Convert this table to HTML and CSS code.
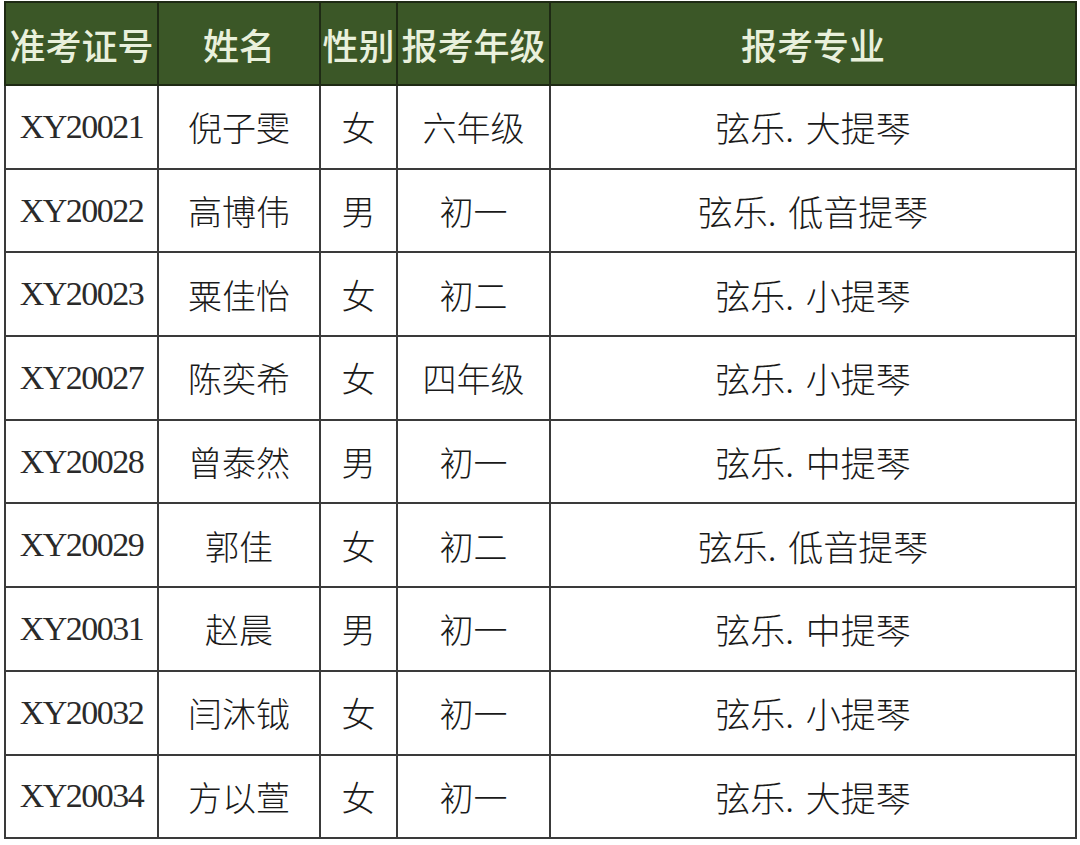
FILE: index.html
```html
<!DOCTYPE html>
<html lang="zh">
<head>
<meta charset="utf-8">
<link rel="stylesheet" href="styles.css">
</head>
<body>
<div class="wrap">
<table class="roster">
  <colgroup>
    <col class="c1"><col class="c2"><col class="c3"><col class="c4"><col class="c5">
  </colgroup>
  <thead>
    <tr><th>准考证号</th><th>姓名</th><th>性别</th><th>报考年级</th><th>报考专业</th></tr>
  </thead>
  <tbody>
    <tr><td class="id">XY20021</td><td>倪子雯</td><td>女</td><td>六年级</td><td>弦乐. 大提琴</td></tr>
    <tr><td class="id">XY20022</td><td>高博伟</td><td>男</td><td>初一</td><td>弦乐. 低音提琴</td></tr>
    <tr><td class="id">XY20023</td><td>粟佳怡</td><td>女</td><td>初二</td><td>弦乐. 小提琴</td></tr>
    <tr><td class="id">XY20027</td><td>陈奕希</td><td>女</td><td>四年级</td><td>弦乐. 小提琴</td></tr>
    <tr><td class="id">XY20028</td><td>曾泰然</td><td>男</td><td>初一</td><td>弦乐. 中提琴</td></tr>
    <tr><td class="id">XY20029</td><td>郭佳</td><td>女</td><td>初二</td><td>弦乐. 低音提琴</td></tr>
    <tr><td class="id">XY20031</td><td>赵晨</td><td>男</td><td>初一</td><td>弦乐. 中提琴</td></tr>
    <tr><td class="id">XY20032</td><td>闫沐钺</td><td>女</td><td>初一</td><td>弦乐. 小提琴</td></tr>
    <tr><td class="id">XY20034</td><td>方以萱</td><td>女</td><td>初一</td><td>弦乐. 大提琴</td></tr>
  </tbody>
</table>
</div>
</body>
</html>
```
FILE: styles.css
```css
html, body {
  margin: 0;
  padding: 0;
  background: #ffffff;
}
.wrap {
  padding: 1px 0 0 4px;
}
.roster {
  width: 1071px;
  table-layout: fixed;
  border-collapse: collapse;
  font-family: "Liberation Serif", "Noto Sans CJK SC", serif;
}
.c1 { width: 153px; }
.c2 { width: 162px; }
.c3 { width: 77px; }
.c4 { width: 153px; }
.c5 { width: 526px; }
.roster th,
.roster td {
  border: 2px solid #3a3a3a;
  text-align: center;
  vertical-align: middle;
  padding: 0;
  white-space: nowrap;
  overflow: hidden;
}
.roster th {
  height: 81px;
  background: #3b5727;
  color: #e9f0dc;
  font-family: "Noto Sans CJK SC", sans-serif;
  font-weight: 500;
  font-size: 36px;
  line-height: 76px;
  border-color: #1e2a14;
}
.roster td {
  height: 81.7px;
  color: #1a1a1a;
  font-family: "Noto Sans CJK SC", sans-serif;
  font-weight: 300;
  font-size: 34px;
}
.roster td:last-child {
  font-size: 35px;
  word-spacing: 4px;
}
.roster td.id {
  font-family: "Liberation Serif", serif;
  font-weight: 400;
  font-size: 34px;
  color: #2a2a2a;
  letter-spacing: -1.5px;
}
```
